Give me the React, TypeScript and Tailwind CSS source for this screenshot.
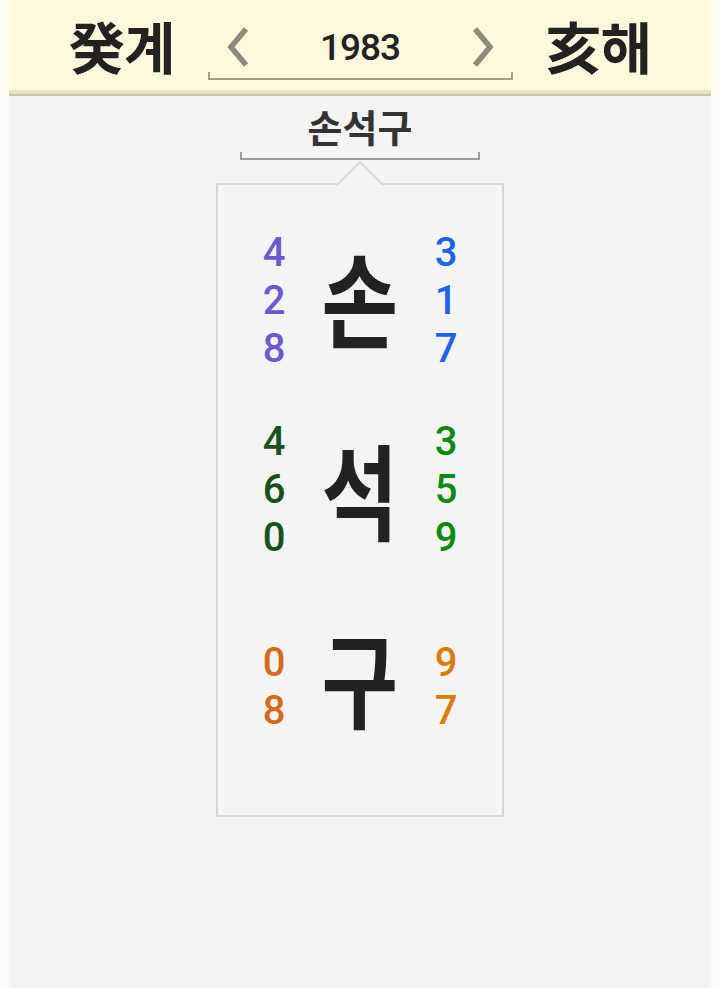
import React from "react";

const KR = { fontFamily: '"Noto Sans CJK KR", "Noto Sans", sans-serif' };
const NUM = { fontFamily: 'Roboto, "Noto Sans", sans-serif' };

function Chevron({ dir }: { dir: "l" | "r" }) {
  return (
    <svg width="24" height="42" viewBox="0 0 24 42">
      <polyline
        points={dir === "l" ? "20,3 5,21 20,39" : "4,3 19,21 4,39"}
        fill="none"
        stroke="#8c8a7e"
        strokeWidth="5.5"
      />
    </svg>
  );
}

type Row = { char: string; left: string[]; right: string[]; lc: string; rc: string; mt: string; shift: string };

const rows: Row[] = [
  { char: "손", left: ["4", "2", "8"], right: ["3", "1", "7"], lc: "text-[#6a5acd]", rc: "text-[#1e62e6]", mt: "mt-[44px]", shift: "-translate-y-[5px]" },
  { char: "석", left: ["4", "6", "0"], right: ["3", "5", "9"], lc: "text-[#17501a]", rc: "text-[#0a8a0a]", mt: "mt-[45px]", shift: "-translate-y-[2px]" },
  { char: "구", left: ["0", "8"], right: ["9", "7"], lc: "text-[#d56a1f]", rc: "text-[#d97c06]", mt: "mt-[73px]", shift: "-translate-y-[11px]" },
];

export default function App() {
  return (
    <div className="w-[720px] min-h-[988px] bg-[#fafafa]">
      <header className="h-[96px] border-x-[9px] border-[#fffbee] bg-[#fff8dc]">
        <div className="h-[90px] flex items-center justify-center gap-[33px]">
          <div className="text-[56px] font-bold text-[#222] leading-none tracking-[-1px]" style={KR}>癸계</div>
          <div className="w-[305px] h-[62px] relative flex items-center justify-between px-[18px] mt-[4px]">
            <Chevron dir="l" />
            <div className="text-[37px] font-medium text-[#222] leading-none tracking-[-1px]" style={NUM}>1983</div>
            <Chevron dir="r" />
            <div className="absolute left-0 right-0 bottom-[-2px] h-[8px] border-x-2 border-b-2 border-[#a3a08a]" />
          </div>
          <div className="text-[56px] font-bold text-[#222] leading-none tracking-[-1px]" style={KR}>亥해</div>
        </div>
        <div className="h-[4px] bg-[#e9e1c1]" />
        <div className="h-[2px] bg-[#c9c1ad]" />
      </header>
      <main className="mx-[9px] bg-[#f4f4f4] min-h-[892px] flex flex-col items-center">
        <div className="mt-[4px] w-[240px] flex flex-col items-center">
          <div className="text-[38px] font-bold text-[#333] leading-[52px]" style={KR}>손석구</div>
          <div className="w-full h-[8px] border-x-2 border-b-2 border-[#9c9c9c]" />
        </div>
        <div className="relative mt-[23px] w-[288px] h-[634px] border-2 border-[#d8d8d8]">
          <svg className="absolute left-[117px] top-[-25px]" width="50" height="27" viewBox="0 0 50 27">
            <polygon points="2,25 25,2 48,25" fill="#f4f4f4" />
            <polyline points="2,25 25,2 48,25" fill="none" stroke="#d8d8d8" strokeWidth="2" />
            <rect x="3" y="25" width="44" height="2" fill="#f4f4f4" />
          </svg>
          {rows.map((r, i) => (
            <div key={i} className={`flex items-center ${r.mt}`}>
              <div className={`w-[112px] flex flex-col items-center text-[40px] font-medium leading-[48px] ${r.lc}`} style={NUM}>
                {r.left.map((d, j) => (
                  <span key={j}>{d}</span>
                ))}
              </div>
              <div className="w-[60px] flex justify-center">
                <span className={`text-[104px] font-bold text-[#222] leading-none scale-x-[0.8] ${r.shift}`} style={KR}>
                  {r.char}
                </span>
              </div>
              <div className={`w-[112px] flex flex-col items-center text-[40px] font-medium leading-[48px] ${r.rc}`} style={NUM}>
                {r.right.map((d, j) => (
                  <span key={j}>{d}</span>
                ))}
              </div>
            </div>
          ))}
        </div>
      </main>
    </div>
  );
}
